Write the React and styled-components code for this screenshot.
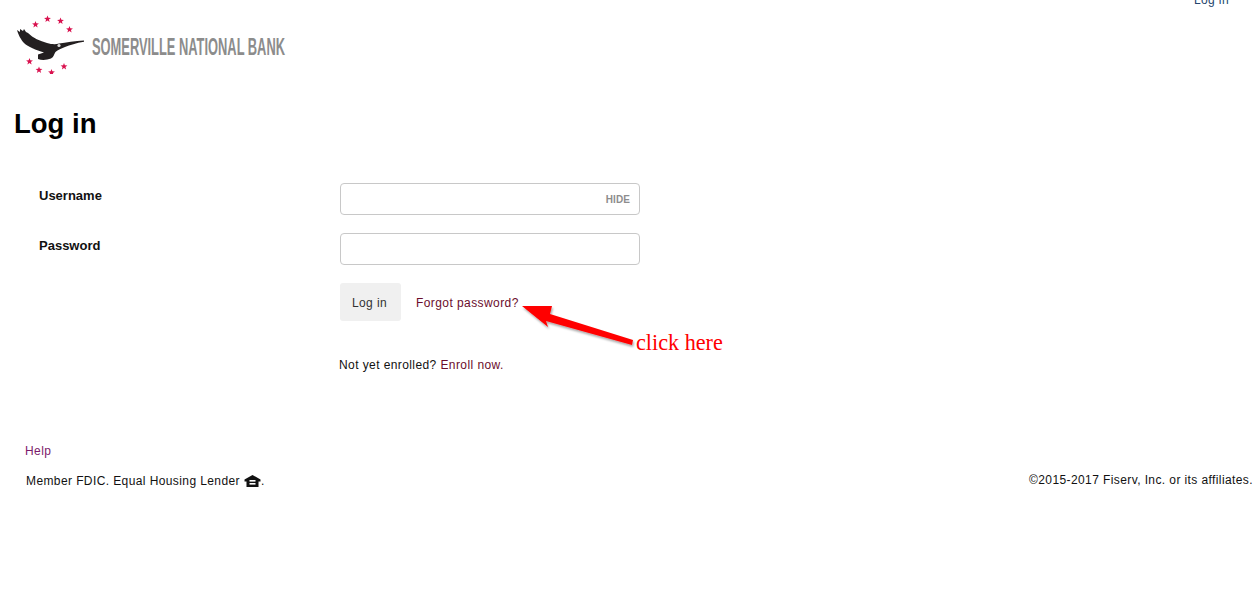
import React from "react";
import styled, { createGlobalStyle } from "styled-components";

const Global = createGlobalStyle`
  html, body { margin: 0; padding: 0; background: #fff; overflow: hidden; }
  body { font-family: "Liberation Sans", Arial, sans-serif; font-size: 12px; color: #111; }
`;
const Page = styled.div`
  position: relative;
  width: 1256px;
  height: 607px;
  overflow: hidden;
`;
const TopBar = styled.div`
  display: flex;
  justify-content: flex-end;
  height: 14px;
  margin-top: -7px;
  padding-right: 27px;
  line-height: 14px;
`;
const TopLink = styled.a`
  color: #24466e;
  letter-spacing: 0.4px;
`;
const LogoWrap = styled.div`
  height: 66px;
  padding: 1px 0 0 14px;
`;
const LogoSvg = styled.svg`
  display: block;
  width: 480px;
  height: 66px;
`;
const Title = styled.h1`
  margin: 33px 0 0 14px;
  font-size: 27.5px;
  line-height: 34px;
  font-weight: 700;
  color: #000;
`;
const Form = styled.div`
  display: grid;
  grid-template-columns: 340px 300px;
  row-gap: 18px;
  margin-top: 42px;
`;
const Label = styled.label`
  padding: 5px 0 0 39px;
  font-size: 13px;
  line-height: 15px;
  font-weight: 700;
  color: #111;
`;
const Field = styled.div`
  box-sizing: border-box;
  display: flex;
  align-items: center;
  justify-content: flex-end;
  height: 32px;
  padding-right: 9px;
  background: #fff;
  border: 1px solid #c8c8c8;
  border-radius: 4px;
`;
const Hide = styled.span`
  font-size: 10px;
  font-weight: 700;
  color: #8d8d8d;
  letter-spacing: 0.1px;
`;
const Actions = styled.div`
  grid-column: 2;
  display: flex;
  align-items: center;
  gap: 15px;
`;
const Button = styled.button`
  width: 61px;
  height: 38px;
  padding: 1px 2px 0 0;
  border: 0;
  border-radius: 3px;
  background: #f0f0f0;
  color: #333;
  font: 12px "Liberation Sans", Arial, sans-serif;
  letter-spacing: 0.4px;
`;
const Link = styled.a`
  color: ${(p) => p.$color || "#6b0d2c"};
  letter-spacing: 0.42px;
`;
const ForgotLink = styled(Link)`
  padding-top: 1px;
`;
const Enroll = styled.p`
  margin: 37px 0 0 339px;
  line-height: 14px;
  letter-spacing: 0.41px;
  color: #111;
`;
const Help = styled.div`
  margin: 72px 0 0 25px;
  line-height: 14px;
`;
const Footer = styled.div`
  display: flex;
  justify-content: space-between;
  margin-top: 15px;
  padding: 0 3px 0 26px;
  line-height: 14px;
  letter-spacing: 0.4px;
`;
const FootLeft = styled.span`
  display: inline-flex;
  align-items: center;
`;
const HouseIcon = styled.svg`
  width: 17px;
  height: 14px;
  margin: 1px 0 0 4px;
`;
const Arrow = styled.svg`
  position: absolute;
  left: 515px;
  top: 295px;
  width: 130px;
  height: 60px;
`;
const Note = styled.span`
  position: absolute;
  left: 636px;
  top: 329px;
  font-family: "Liberation Serif", "Times New Roman", serif;
  font-size: 22.2px;
  line-height: 27px;
  color: #f00;
`;

const stars = [
  [47.5, 19], [60.5, 21], [69.5, 29.5], [35.5, 24.5],
  [29.5, 61.5], [39, 70], [51.5, 72.5], [64, 66.5],
];
const starPath = (cx, cy) => {
  const pts = [];
  for (let i = 0; i < 10; i++) {
    const r = i % 2 ? 1.5 : 3.6;
    const a = -Math.PI / 2 + (i * Math.PI) / 5;
    pts.push(`${(cx + r * Math.cos(a)).toFixed(2)},${(cy + r * Math.sin(a)).toFixed(2)}`);
  }
  return pts.join(" ");
};

function Logo() {
  return (
    <LogoSvg viewBox="14 8 480 66">
      {stars.map(([x, y]) => (
        <polygon key={x} points={starPath(x, y)} fill="#d9124f" />
      ))}
      <path
        d="M17 30 L20 32 L20 29 L23 31 L24 29 L26 32 L28 33 C33 38 40 41 47 43 C52 44.500 56 44.500 59 43.500 C66 42.500 75 41 84 40.500 L84 41.700 C76 43 70 45 65 47 C61 49 57 50 55.500 52 C54 54 54 57 51 58.500 C47 60 42 60.500 38 59 L38 54.500 L44 52.500 C36 50 28 47 24 43 C21 40 18 34 17 30 Z"
        fill="#231f20"
      />
      <circle cx="59" cy="45.500" r="1.600" fill="#ddd" />
      <text
        x="92"
        y="55"
        fontFamily="'Liberation Sans', Arial, sans-serif"
        fontWeight="700"
        fontSize="24.5"
        fill="#8c8c8c"
        textLength="193"
        lengthAdjust="spacingAndGlyphs"
      >
        SOMERVILLE NATIONAL BANK
      </text>
    </LogoSvg>
  );
}

export default function App() {
  return (
    <Page>
      <Global />
      <TopBar>
        <TopLink>Log in</TopLink>
      </TopBar>
      <LogoWrap>
        <Logo />
      </LogoWrap>
      <Title>Log in</Title>
      <Form>
        <Label>Username</Label>
        <Field>
          <Hide>HIDE</Hide>
        </Field>
        <Label>Password</Label>
        <Field />
        <Actions>
          <Button>Log in</Button>
          <ForgotLink>Forgot password?</ForgotLink>
        </Actions>
      </Form>
      <Enroll>
        Not yet enrolled? <Link>Enroll now.</Link>
      </Enroll>
      <Help>
        <Link $color="#7b1a6b">Help</Link>
      </Help>
      <Footer>
        <FootLeft>
          Member FDIC. Equal Housing Lender
          <HouseIcon viewBox="0 0 17 14">
            <path d="M8.500 1 L0.500 5.500 L0.500 7.500 L2.500 7.500 L2.500 13 L14.500 13 L14.500 7.500 L16.500 7.500 L16.500 5.500 Z" fill="#111" />
            <rect x="5.500" y="6" width="6" height="1.600" fill="#fff" />
            <rect x="5.500" y="9" width="6" height="1.600" fill="#fff" />
          </HouseIcon>
          .
        </FootLeft>
        <span>©2015-2017 Fiserv, Inc. or its affiliates.</span>
      </Footer>
      <Arrow viewBox="0 0 130 60">
        <defs>
          <filter id="arrowShadow" x="-10%" y="-20%" width="120%" height="150%">
            <feDropShadow dx="1" dy="2" stdDeviation="1.2" floodColor="#000" floodOpacity="0.35" />
          </filter>
        </defs>
        <path
          d="M7 11 L37 11 L35 19 L118 45 L117 50 L31 26 L33 32 Z"
          fill="#f00"
          filter="url(#arrowShadow)"
        />
      </Arrow>
      <Note>click here</Note>
    </Page>
  );
}
